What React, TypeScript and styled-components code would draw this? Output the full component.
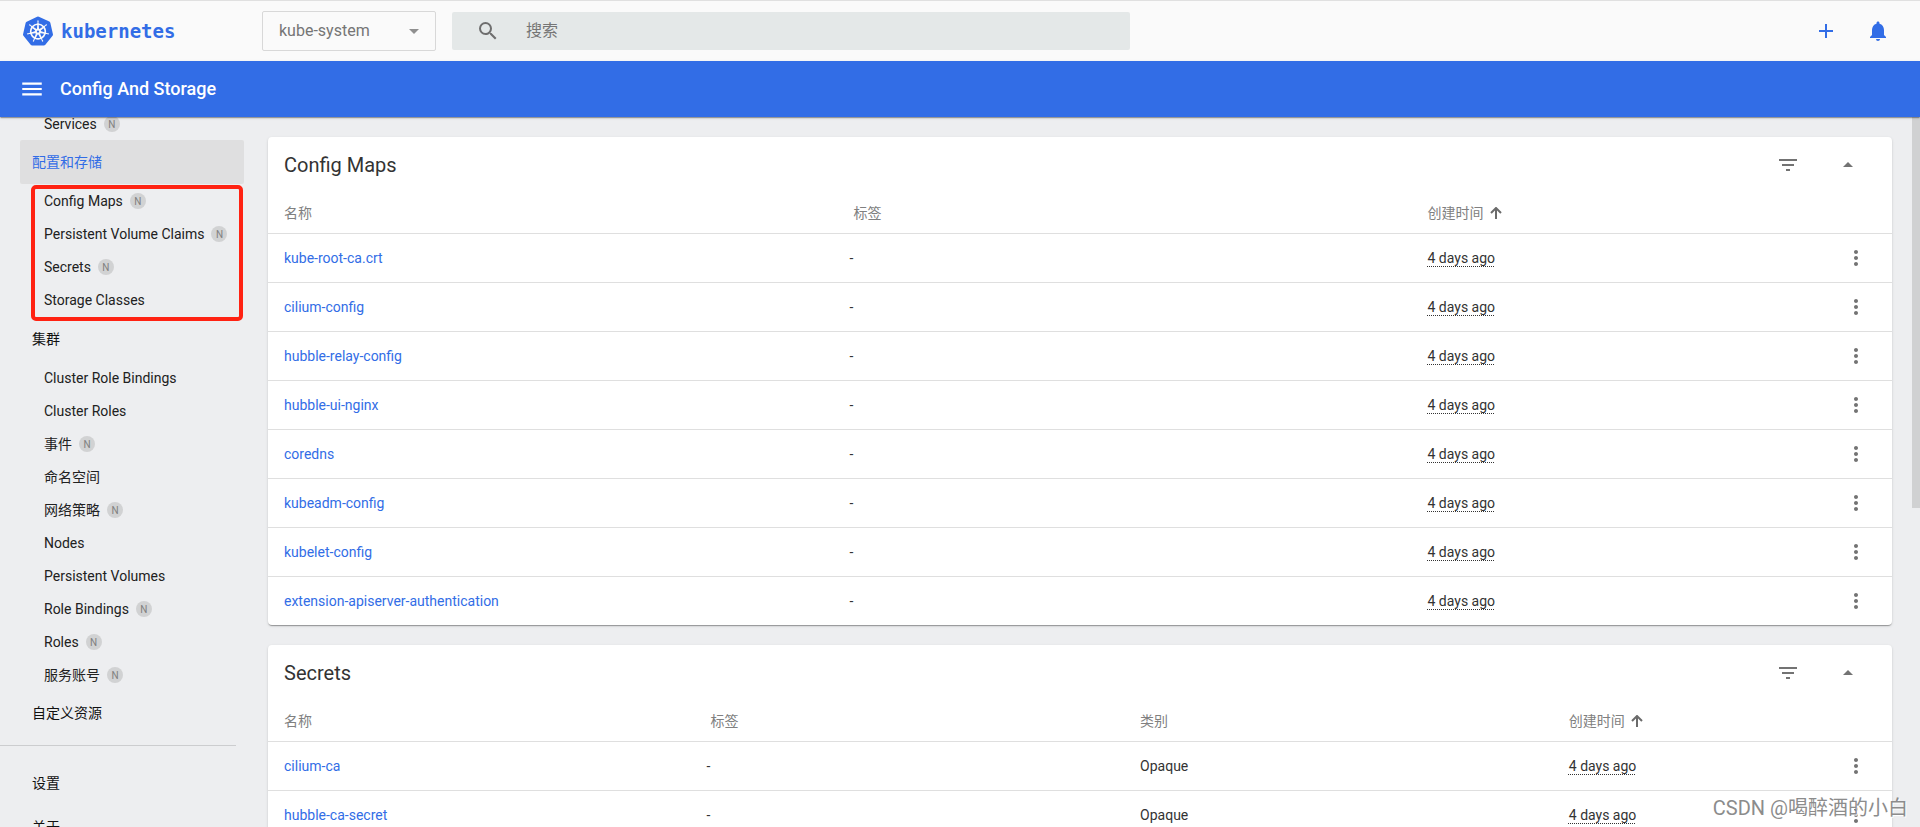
import React from 'react';
import styled, { createGlobalStyle } from 'styled-components';
import {
  MdAdd,
  MdArrowDropDown,
  MdArrowDropUp,
  MdFilterList,
  MdMenu,
  MdMoreVert,
  MdNotifications,
  MdSearch,
} from 'react-icons/md';
import { SiKubernetes } from 'react-icons/si';

const blue = '#326de6';
const line = '#dfdfdf';
const muted = '#757575';

const GlobalStyle = createGlobalStyle`
  * { box-sizing: border-box; }
  body {
    margin: 0;
    background: #edeef0;
    color: #212121;
    font: 400 14px/20px Roboto, "Noto Sans CJK SC", sans-serif;
  }
  a { color: inherit; text-decoration: none; }
  button, input, select { font: inherit; }
`;

const Page = styled.div`
  position: relative;
  display: flex;
  flex-direction: column;
  height: 100vh;
  overflow: hidden;
`;

const TopBar = styled.header`
  display: flex;
  align-items: center;
  height: 61px;
  flex: none;
  padding: 0 22px 0 23px;
  background: #fafafa;
  border-top: 1px solid #e0e0e0;
`;

const Brand = styled.a`
  display: flex;
  align-items: center;
  gap: 8px;
  width: 239px;
  flex: none;
  color: ${blue};
  font: 700 19px/24px "DejaVu Sans Mono", monospace;
`;

const NamespaceBox = styled.div`
  position: relative;
  width: 174px;
  flex: none;
  margin-right: 16px;

  svg {
    position: absolute;
    right: 10px;
    top: 8px;
    color: #8f8f8f;
    pointer-events: none;
  }
`;

const NamespaceSelect = styled.select`
  display: block;
  appearance: none;
  width: 100%;
  height: 40px;
  padding: 0 16px;
  border: 1px solid #d8d8d8;
  border-radius: 2px;
  background: transparent;
  color: ${muted};
  font-size: 16px;
`;

const SearchBox = styled.label`
  display: flex;
  align-items: center;
  gap: 26px;
  flex: 0 1 678px;
  height: 38px;
  padding: 0 24px;
  border-radius: 2px;
  background: #e4e8e8;
  color: #6e6e6e;
`;

const SearchInput = styled.input`
  flex: 1;
  min-width: 0;
  padding: 0;
  border: 0;
  outline: 0;
  background: transparent;
  font-size: 16px;
  &::placeholder { color: ${muted}; opacity: 1; }
`;

const TopActions = styled.div`
  display: flex;
  gap: 12px;
  margin-left: auto;
`;

const IconButton = styled.button<{ $color?: string }>`
  display: flex;
  align-items: center;
  justify-content: center;
  width: 40px;
  height: 40px;
  flex: none;
  padding: 0;
  border: 0;
  background: transparent;
  color: ${(p) => p.$color ?? '#737373'};
`;

const TitleBar = styled.div`
  position: relative;
  z-index: 1;
  display: flex;
  align-items: center;
  gap: 8px;
  height: 56px;
  flex: none;
  padding: 0 12px;
  background: ${blue};
  color: #fff;
  box-shadow: 0 2px 1px -1px rgba(0, 0, 0, 0.2), 0 1px 1px rgba(0, 0, 0, 0.14),
    0 1px 3px rgba(0, 0, 0, 0.12);
`;

const PageTitle = styled.h1`
  margin: 0;
  font-size: 18px;
  line-height: 24px;
  font-weight: 500;
`;

const Body = styled.div`
  display: flex;
  flex: 1;
  min-height: 0;
`;

const Sidebar = styled.nav`
  width: 248px;
  flex: none;
  overflow: hidden;
`;

const NavContent = styled.div`
  margin-top: -10px;
`;

const SectionLink = styled.a<{ $active?: boolean }>`
  display: flex;
  align-items: center;
  height: 44px;
  margin: 0 4px 0 20px;
  padding: 0 12px;
  border-radius: 2px;
  background: ${(p) => (p.$active ? '#dfdfe0' : 'transparent')};
  color: ${(p) => (p.$active ? blue : '#111')};
`;

const NavList = styled.ul<{ $highlighted?: boolean }>`
  position: relative;
  margin: 0;
  padding: 0 0 ${(p) => (p.$highlighted ? 1 : 0)}px;
  list-style: none;
`;

const NavItem = styled.li`
  display: flex;
  align-items: center;
  gap: 7px;
  height: 33px;
  padding-left: 44px;
`;

const Badge = styled.span`
  width: 16px;
  height: 16px;
  border-radius: 50%;
  background: #d1d2d3;
  color: #808080;
  font-size: 10px;
  line-height: 17px;
  text-align: center;
`;

const Highlight = styled.div`
  position: absolute;
  top: 1px;
  bottom: -4px;
  left: 31px;
  right: 5px;
  border: 4px solid #ff2212;
  border-radius: 5px;
  pointer-events: none;
`;

const NavDivider = styled.hr`
  height: 1px;
  margin: 10px 12px 15px 0;
  border: 0;
  background: #cccdcf;
`;

const Main = styled.main`
  display: flex;
  flex-direction: column;
  gap: 20px;
  flex: 1;
  min-width: 0;
  padding: 20px;
  overflow: hidden;
`;

const ScrollTrack = styled.div`
  width: 8px;
  flex: none;
`;

const ScrollThumb = styled.div`
  height: 55%;
  background: #d0d1d2;
`;

const Card = styled.section`
  flex: none;
  border-radius: 4px;
  background: #fff;
  box-shadow: 0 2px 1px -1px rgba(0, 0, 0, 0.2), 0 1px 1px rgba(0, 0, 0, 0.14),
    0 1px 3px rgba(0, 0, 0, 0.12);
`;

const CardHeader = styled.div`
  display: flex;
  align-items: center;
  gap: 20px;
  height: 56px;
  padding: 0 24px 0 16px;
`;

const CardTitle = styled.h2`
  flex: 1;
  margin: 0;
  color: #333;
  font-size: 20px;
  line-height: 24px;
  font-weight: 400;
`;

const Table = styled.table`
  width: 100%;
  table-layout: fixed;
  border-collapse: separate;
  border-spacing: 0;

  th, td {
    padding: 0;
    border-bottom: 1px solid ${line};
    text-align: left;
    font-weight: 400;
  }
  th { height: 41px; color: #808080; }
  td { height: 49px; color: #333; }
  tr:last-child td { height: 48px; border-bottom: 0; }
  th:first-child, td:first-child { padding-left: 16px; }
  td:last-child { padding-left: 16px; }
`;

const LabelHeading = styled.span`
  padding-left: 4px;
`;

const SortButton = styled.button`
  display: flex;
  align-items: center;
  gap: 6px;
  padding: 0;
  border: 0;
  background: transparent;
  color: inherit;
`;

const ResourceLink = styled.a`
  color: ${blue};
`;

const Age = styled.time`
  text-decoration: underline dotted 1px;
  text-underline-offset: 3px;
`;

const Watermark = styled.div`
  position: absolute;
  right: 12px;
  bottom: 4px;
  z-index: 2;
  color: #8c8c8c;
  font-size: 20px;
  line-height: 30px;
  text-shadow: 1px 1px 0 #fff;
  pointer-events: none;
`;

interface Entry {
  label: string;
  namespaced?: boolean;
}

const configItems: Entry[] = [
  { label: 'Config Maps', namespaced: true },
  { label: 'Persistent Volume Claims', namespaced: true },
  { label: 'Secrets', namespaced: true },
  { label: 'Storage Classes' },
];

const clusterItems: Entry[] = [
  { label: 'Cluster Role Bindings' },
  { label: 'Cluster Roles' },
  { label: '事件', namespaced: true },
  { label: '命名空间' },
  { label: '网络策略', namespaced: true },
  { label: 'Nodes' },
  { label: 'Persistent Volumes' },
  { label: 'Role Bindings', namespaced: true },
  { label: 'Roles', namespaced: true },
  { label: '服务账号', namespaced: true },
];

const configMaps = [
  'kube-root-ca.crt',
  'cilium-config',
  'hubble-relay-config',
  'hubble-ui-nginx',
  'coredns',
  'kubeadm-config',
  'kubelet-config',
  'extension-apiserver-authentication',
];

const secrets = ['cilium-ca', 'hubble-ca-secret'];

function NavGroup({ items, highlighted }: { items: Entry[]; highlighted?: boolean }) {
  return (
    <NavList $highlighted={highlighted}>
      {items.map((item) => (
        <NavItem key={item.label}>
          <a href="#">{item.label}</a>
          {item.namespaced && <Badge>N</Badge>}
        </NavItem>
      ))}
      {highlighted && <Highlight as="li" aria-hidden="true" />}
    </NavList>
  );
}

function SortArrow() {
  return (
    <svg width="12" height="12" viewBox="0 0 12 12" fill="none" stroke="#6b6b6b" strokeWidth="2">
      <path d="M6 12V2M1 6l5-5 5 5" />
    </svg>
  );
}

interface ResourceCardProps {
  title: string;
  names: string[];
  widths: string[];
  kind?: string;
}

function ResourceCard({ title, names, widths, kind }: ResourceCardProps) {
  return (
    <Card>
      <CardHeader>
        <CardTitle>{title}</CardTitle>
        <IconButton aria-label="过滤"><MdFilterList size={24} /></IconButton>
        <IconButton aria-label="收起"><MdArrowDropUp size={24} /></IconButton>
      </CardHeader>
      <Table>
        <colgroup>
          {widths.map((width, i) => <col key={i} style={{ width }} />)}
          <col />
          <col style={{ width: '72px' }} />
        </colgroup>
        <thead>
          <tr>
            <th>名称</th>
            <th><LabelHeading>标签</LabelHeading></th>
            {kind && <th>类别</th>}
            <th><SortButton>创建时间<SortArrow /></SortButton></th>
            <th />
          </tr>
        </thead>
        <tbody>
          {names.map((name) => (
            <tr key={name}>
              <td><ResourceLink href="#">{name}</ResourceLink></td>
              <td>-</td>
              {kind && <td>{kind}</td>}
              <td><Age>4 days ago</Age></td>
              <td><IconButton aria-label="更多"><MdMoreVert size={24} /></IconButton></td>
            </tr>
          ))}
        </tbody>
      </Table>
    </Card>
  );
}

export default function App() {
  return (
    <Page>
      <GlobalStyle />
      <TopBar>
        <Brand href="#"><SiKubernetes size={30} />kubernetes</Brand>
        <NamespaceBox>
          <NamespaceSelect aria-label="命名空间">
            <option>kube-system</option>
          </NamespaceSelect>
          <MdArrowDropDown size={24} />
        </NamespaceBox>
        <SearchBox>
          <MdSearch size={24} />
          <SearchInput type="text" placeholder="搜索" aria-label="搜索" />
        </SearchBox>
        <TopActions>
          <IconButton $color={blue} aria-label="新建"><MdAdd size={24} /></IconButton>
          <IconButton $color={blue} aria-label="通知"><MdNotifications size={24} /></IconButton>
        </TopActions>
      </TopBar>
      <TitleBar>
        <IconButton $color="#fff" aria-label="菜单"><MdMenu size={26} /></IconButton>
        <PageTitle>Config And Storage</PageTitle>
      </TitleBar>
      <Body>
        <Sidebar>
          <NavContent>
            <NavGroup items={[{ label: 'Services', namespaced: true }]} />
            <SectionLink href="#" $active>配置和存储</SectionLink>
            <NavGroup items={configItems} highlighted />
            <SectionLink href="#">集群</SectionLink>
            <NavGroup items={clusterItems} />
            <SectionLink href="#">自定义资源</SectionLink>
            <NavDivider />
            <SectionLink href="#">设置</SectionLink>
            <SectionLink href="#">关于</SectionLink>
          </NavContent>
        </Sidebar>
        <Main>
          <ResourceCard title="Config Maps" names={configMaps} widths={['35.8%', '35.6%']} />
          <ResourceCard title="Secrets" names={secrets} widths={['27%', '26.7%', '26.4%']} kind="Opaque" />
        </Main>
        <ScrollTrack><ScrollThumb /></ScrollTrack>
      </Body>
      <Watermark>CSDN @喝醉酒的小白</Watermark>
    </Page>
  );
}
